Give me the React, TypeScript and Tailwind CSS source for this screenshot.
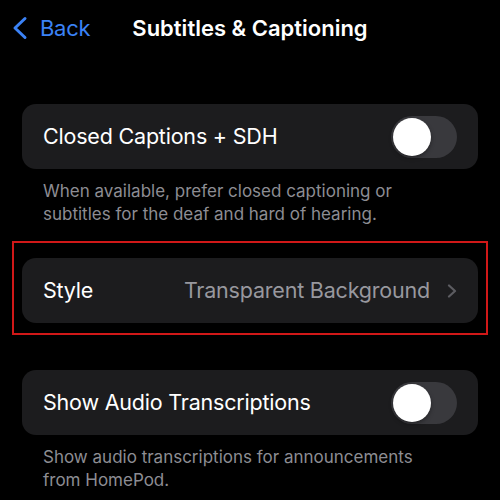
import React from "react";

function BackChevron() {
  return (
    <svg width="16" height="24" viewBox="0 0 16 24" fill="none" stroke="currentColor" strokeWidth="3" strokeLinecap="round" strokeLinejoin="round" aria-hidden="true">
      <polyline points="13 2.5 3 12 13 21.5" />
    </svg>
  );
}

function RowChevron() {
  return (
    <svg width="10" height="14" viewBox="0 0 10 14" fill="none" stroke="currentColor" strokeWidth="2.2" strokeLinecap="round" strokeLinejoin="round" aria-hidden="true">
      <polyline points="2 1.5 8 7 2 12.5" />
    </svg>
  );
}

function Toggle() {
  return (
    <div className="flex h-[42px] w-[66px] flex-shrink-0 items-center rounded-full bg-[#39393d] px-[2px]">
      <div className="h-[38px] w-[38px] rounded-full bg-white shadow-[0_2px_4px_rgba(0,0,0,0.35)]" />
    </div>
  );
}

function Card({ children }: { children: React.ReactNode }) {
  return (
    <div className="flex h-[65px] items-center justify-between rounded-[14px] bg-[#1c1c1e] pl-[21px] pr-[21px]">
      {children}
    </div>
  );
}

function Footer({ children }: { children: React.ReactNode }) {
  return (
    <p className="mt-[11px] pl-[43px] pr-4 text-[17px] leading-[23px] text-[#8d8d93]">
      {children}
    </p>
  );
}

export default function App() {
  return (
    <div
      className="h-[500px] w-[500px] overflow-hidden bg-black text-white"
      style={{ fontFamily: "Inter, 'Noto Sans', sans-serif" }}
    >
      <div className="grid h-[56px] grid-cols-[1fr_auto_1fr] items-center">
        <div className="flex items-center gap-[12px] pl-[12px] text-[#3b82f6]">
          <BackChevron />
          <span className="text-[22px] leading-none tracking-[-0.3px]">Back</span>
        </div>
        <div className="text-[22px] font-semibold leading-none">Subtitles &amp; Captioning</div>
        <div />
      </div>

      <div className="mt-[48px] px-[22px]">
        <Card>
          <span className="text-[21.5px] tracking-[-0.2px]">Closed Captions + SDH</span>
          <Toggle />
        </Card>
      </div>
      <Footer>
        When available, prefer closed captioning or
        <br />
        subtitles for the deaf and hard of hearing.
      </Footer>

      <div className="mx-[12px] mt-[15px] border-2 border-[#d01818] px-[8px] pb-[10px] pt-[15px]">
        <Card>
          <span className="text-[21.5px] tracking-[-0.2px]">Style</span>
          <div className="flex items-center gap-[17px] text-[#98989e]">
            <span className="text-[21.5px] tracking-[-0.2px]">Transparent Background</span>
            <span className="text-[#5c5c61]">
              <RowChevron />
            </span>
          </div>
        </Card>
      </div>

      <div className="mt-[35px] px-[22px]">
        <Card>
          <span className="text-[21.5px] tracking-[-0.2px]">Show Audio Transcriptions</span>
          <Toggle />
        </Card>
      </div>
      <Footer>
        Show audio transcriptions for announcements
        <br />
        from HomePod.
      </Footer>
    </div>
  );
}
